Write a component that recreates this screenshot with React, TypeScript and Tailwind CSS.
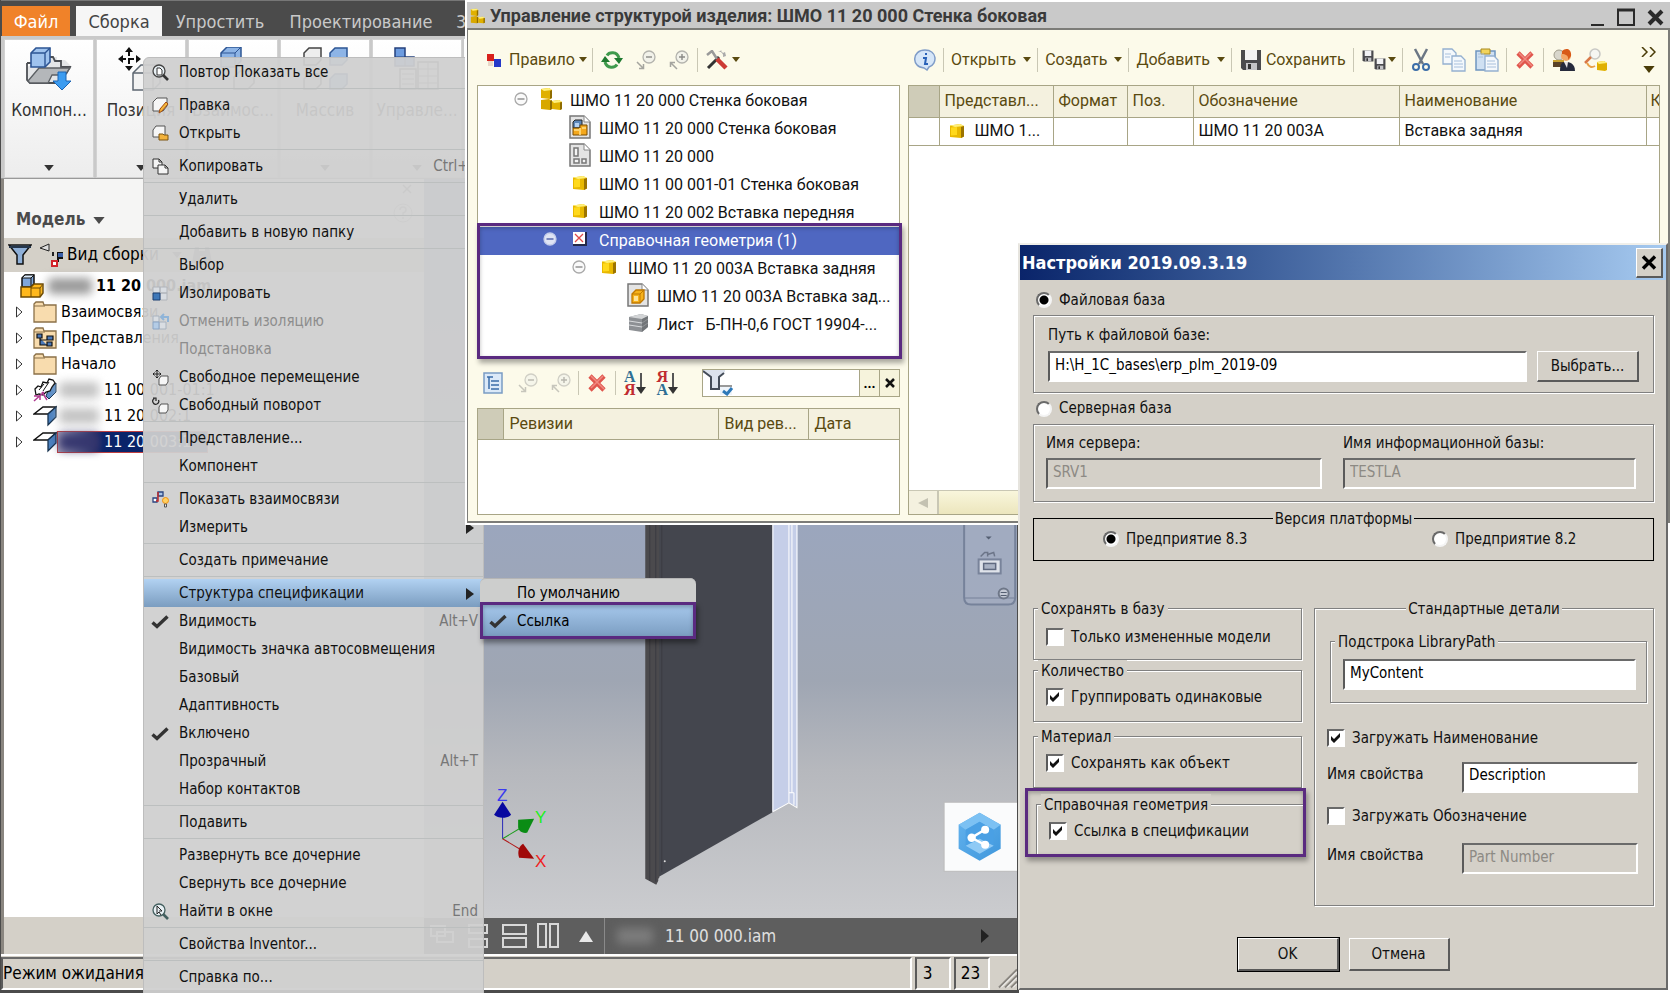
import { useState, type ReactNode } from 'react'
import { clsx } from 'clsx'

const TAHOMA = "font-['DejaVu_Sans_Condensed','Noto_Sans',sans-serif]"
const ROBOTO = "font-['Roboto','Liberation_Sans',sans-serif]"

const SUNKEN = 'border-2 border-t-[#6a6a6a] border-l-[#5a5a5a] border-r-white border-b-white'
const RAISED = 'border-t border-l border-r-2 border-b-2 border-t-white border-l-white border-r-[#5a5a5a] border-b-[#5a5a5a]'
const ETCHED = 'border border-[#808080] shadow-[1px_1px_0_#fff,inset_1px_1px_0_#fff]'

interface IconProps {
  className?: string
}

/* ---------- shared icons ---------- */

function Caret({ className }: IconProps) {
  return (
    <svg viewBox="0 0 8 5" className={clsx('w-2 h-[5px] shrink-0', className)}>
      <path d="M0 0h8L4 5z" fill="currentColor" />
    </svg>
  )
}

function CheckMark({ className }: IconProps) {
  return (
    <svg viewBox="0 0 18 14" className={className}>
      <path d="M1.500 7.500 6 11.500 16.500 1.500" fill="none" stroke="#333" strokeWidth="3.400" />
    </svg>
  )
}

function YellowPart({ className }: IconProps) {
  return (
    <svg viewBox="0 0 16 16" className={clsx('w-4 h-4', className)}>
      <path d="M1 2.500 11 1l4 2v10.500l-3 1.500L1 14z" fill="#e8b800" />
      <path d="M1 2.500 11 1l4 2-9 1z" fill="#fff07a" />
      <path d="M12 4l3-1v10.500L12 15z" fill="#9c7400" />
      <path d="M2 4.500 8 4v8l-6 .5z" fill="#ffd91c" />
    </svg>
  )
}

function YellowAssembly({ className }: IconProps) {
  return (
    <svg viewBox="0 0 22 24" className={className}>
      <path d="M1 2 9 1l3 2v8l-2 1-9-1z" fill="#e0b000" />
      <path d="M1 2 9 1l3 2-8 1z" fill="#fff07a" />
      <path d="M10 4l2-1v8l-2 1z" fill="#8f6c00" />
      <path d="M1 13l8-1 3 2v8l-2 1-9-1z" fill="#d8a800" />
      <path d="M10 14l2-1v9l-2 1z" fill="#8f6c00" />
      <path d="M12 14l7-1 3 2v7l-2 1-8-1z" fill="#e0b000" />
      <path d="M12 14l7-1 3 2-8 1z" fill="#fff07a" />
      <path d="M20 15.500l2-.5v7l-2 1z" fill="#8f6c00" />
    </svg>
  )
}

function Minus({ className, light }: IconProps & { light?: boolean }) {
  return (
    <svg viewBox="0 0 14 14" className={clsx('w-[14px] h-[14px]', className)}>
      <circle cx="7" cy="7" r="6" fill={light ? '#dfe4f4' : '#fafafa'} stroke={light ? '#c5cdea' : '#a9a9a9'} strokeWidth="1.300" />
      <path d="M3.500 7h7" stroke={light ? '#4f5fa8' : '#8c8c8c'} strokeWidth="1.400" />
    </svg>
  )
}

function ZoomArrow({ plus, className }: IconProps & { plus?: boolean }) {
  return (
    <svg viewBox="0 0 20 20" className={clsx('w-5 h-5', className)}>
      <circle cx="13" cy="7" r="6" fill="#f2f2ea" stroke="#b3b3ad" strokeWidth="1.300" />
      <path d={plus ? 'M10 7h6M13 4v6' : 'M10 7h6'} stroke="#8a8a86" strokeWidth="1.400" />
      <path d={plus ? 'M8 19 2 13M1.500 17v-4.500H6' : 'M1 12l6 6M7.500 14v4.500H3'} stroke="#a5a59f" strokeWidth="1.500" fill="none" />
    </svg>
  )
}

function RedCross({ className }: IconProps) {
  return (
    <svg viewBox="0 0 18 18" className={clsx('w-[18px] h-[18px]', className)}>
      <path d="M2 2 16 16M16 2 2 16" stroke="#e0564d" strokeWidth="4.600" />
      <path d="M3 2 16 15M15 2 3 14" stroke="#f08a80" strokeWidth="1.500" />
    </svg>
  )
}

/* ---------- Inventor ribbon ---------- */

function PlaceIcon() {
  return (
    <svg viewBox="0 0 46 44" className="w-[46px] h-11">
      <path d="M1 20V33l3 3h27l5-8-8-4 17-5-6-6h-8v-3H22z" fill="#e4e6e8" />
      <path d="M1 16h4M1 16v17l3 3h26M24 10h3l2 4h6v6h9l-4 7" fill="none" stroke="#4c4f54" strokeWidth="1.800" />
      <path d="M2 34 13 21h31l-5 7H26l-4 8H4z" fill="#b4b7ba" stroke="#5c6064" strokeWidth="1.300" />
      <path d="M5 6 10 1h14v14l-5 5H5z" fill="#9fc3ee" stroke="#2d5594" strokeWidth="1.600" />
      <path d="M5 6h14v14M19 6l5-5" fill="none" stroke="#2d5594" strokeWidth="1.400" />
      <path d="M32 25h8v9h5l-9 9-9-9h5z" fill="#3c9cf0" stroke="#1b64b4" />
    </svg>
  )
}

function MoveIcon() {
  return (
    <svg viewBox="0 0 46 44" className="w-[46px] h-11">
      <path d="M11 3v18M2 12h18" stroke="#111" strokeWidth="2" strokeDasharray="6 2" />
      <path d="M11 0l4 5H7zM11 24l4-5H7zM0 12l5-4v8zM23 12l-5-4v8z" fill="#111" />
      <path d="M15 26l8-8h19v18l-7 7H15z" fill="#f2f2f2" stroke="#5c6670" strokeWidth="1.500" />
      <path d="M15 26h20v17M35 26l7-8" fill="none" stroke="#5c6670" strokeWidth="1.300" />
    </svg>
  )
}

function ConstrainIcon() {
  return (
    <svg viewBox="0 0 46 44" className="w-[46px] h-11">
      <path d="M11 6l6-6h14v14l-6 6H11z" fill="#8db4e6" stroke="#2d5594" strokeWidth="1.500" />
      <path d="M11 6h14v14M25 6l6-6" fill="none" stroke="#2d5594" />
      <path d="M24 30l6-6h14v12l-6 6H24z" fill="#eee" stroke="#555" strokeWidth="1.500" />
    </svg>
  )
}

function PatternIcon() {
  return (
    <svg viewBox="0 0 46 44" className="w-[46px] h-11">
      <path d="M2 6l5-5h12v12l-5 5H2zM2 32l5-5h12v10l-5 5H2z" fill="#eee" stroke="#444" strokeWidth="1.500" />
      <path d="M28 6l5-5h12v12l-5 5H28zM28 32l5-5h12v10l-5 5H28z" fill="#8db4e6" stroke="#2d5594" strokeWidth="1.500" />
    </svg>
  )
}

function ManageIcon() {
  return (
    <svg viewBox="0 0 46 44" className="w-[46px] h-11">
      <path d="M1 1h10v9h9v9H1z" fill="#6d9ce0" stroke="#24407c" strokeWidth="1.500" />
      <path d="M1 10h10v9" fill="none" stroke="#24407c" />
      <path d="M6 22h16v20H6zM24 15h20v27H24z" fill="#f4f4f4" stroke="#555" strokeWidth="1.500" />
      <path d="M8 27h12M8 32h12M8 37h12M24 22h20M34 15v27M24 29h20M24 36h20" stroke="#777" />
    </svg>
  )
}

const RIBBON: { label: string; icon: ReactNode }[] = [
  { label: 'Компон...', icon: <PlaceIcon /> },
  { label: 'Позиция', icon: <MoveIcon /> },
  { label: 'Взаимос...', icon: <ConstrainIcon /> },
  { label: 'Массив', icon: <PatternIcon /> },
  { label: 'Управле...', icon: <ManageIcon /> },
]

function Ribbon() {
  return (
    <>
      <nav className="flex h-9 items-end bg-[#4b4b4b] border-t border-[#777] pl-px text-[18px] text-[#c9c9c9] whitespace-nowrap overflow-hidden">
        <a href="#file" className="flex h-[30px] w-[68px] items-center justify-center bg-[#f08229] text-white">Файл</a>
        <a href="#assembly" className="ml-[6px] flex h-[30px] w-[86px] items-center justify-center bg-[#f6f6f6] text-[#444]">Сборка</a>
        <a href="#simplify" className="flex h-[30px] w-[116px] items-center justify-center">Упростить</a>
        <a href="#design" className="flex h-[30px] w-[166px] items-center justify-center">Проектирование</a>
        <a href="#3d" className="flex h-[30px] items-center pl-3">3D-модель</a>
      </nav>
      <div className="flex h-[143px] gap-[2px] overflow-hidden border-b border-[#999] bg-[#c9c9c9] pl-[3px] pt-[3px]">
        {RIBBON.map(item => (
          <button key={item.label} className="flex w-[90px] shrink-0 flex-col items-center border border-[#d2d2d2] bg-gradient-to-b from-white to-[#ededed] pt-[7px] text-[17px] text-[#333]">
            {item.icon}
            <span className="mt-[7px] leading-6">{item.label}</span>
            <Caret className="mt-[43px] w-3! h-[6px]!" />
          </button>
        ))}
        <div className="flex-1 bg-gradient-to-b from-white to-[#ededed]" />
      </div>
    </>
  )
}

/* ---------- Inventor model browser ---------- */

function FolderIcon({ views }: { views?: boolean }) {
  return (
    <svg viewBox="0 0 24 22" className="h-[22px] w-6">
      <path d="M1 3 3 1h7l1 3h12v17H1z" fill="#f8dcae" stroke="#8a7048" strokeWidth="1.300" />
      <path d="M1 5h11" stroke="#8a7048" />
      {views && <path d="M4 7h5v4H4zM14 9h6v4h-6zM14 15h5v4h-5zM7 11v7h7M7 13h7" fill="#4a78b8" stroke="#111" strokeWidth="1.200" />}
    </svg>
  )
}

function SheetPartIcon({ first }: { first?: boolean }) {
  return (
    <svg viewBox="0 0 24 24" className="h-6 w-6">
      {first ? (
        <>
          <path d="M15 13 23 5v9l-7 7-3-3z" fill="#5d8fc8" stroke="#16324f" />
          <path d="M2 11 5 8l3 1 2-5 4 1 2-4 4 1 2 3-3 4-2 4-4 1-3 3-4-1-3 1z" fill="#fff" stroke="#111" strokeWidth="1.300" />
          <path d="M6 12l5-6M10 13l6-9" stroke="#111" />
          <path d="M1 18h6v4M1 23l10-9M9 14l5 8" stroke="#b03a90" strokeWidth="1.500" fill="none" />
        </>
      ) : (
        <>
          <path d="M1 10 10 3h13l-8 7z" fill="#fff" stroke="#111" strokeWidth="1.500" />
          <path d="M15 10 23 3v10l-8 8z" fill="#4c82c0" stroke="#16324f" strokeWidth="1.300" />
        </>
      )}
    </svg>
  )
}

function AssemblyIcon() {
  return (
    <svg viewBox="0 0 24 24" className="h-6 w-6">
      <path d="M2 4 5 1h9v9l-3 3H2z" fill="#7fa6da" stroke="#111" strokeWidth="1.500" />
      <path d="M2 4 5 1h9l-3 3z" fill="#dcebfb" stroke="#111" />
      <path d="M11 4v9" stroke="#111" />
      <path d="M1 13h10l3-3h9v9l-3 4H1z" fill="#ffb81c" stroke="#6e4a00" strokeWidth="1.500" />
      <path d="M11 13v10M11 14h9v9M20 14l3-4" fill="none" stroke="#6e4a00" />
    </svg>
  )
}

interface BrowserRow {
  label: string
  icon: ReactNode
  masked?: boolean
  selected?: boolean
}

const BROWSER_ROWS: BrowserRow[] = [
  { label: 'Взаимосвязи', icon: <FolderIcon /> },
  { label: 'Представления', icon: <FolderIcon views /> },
  { label: 'Начало', icon: <FolderIcon /> },
  { label: '11 00 001-01:1', icon: <SheetPartIcon first />, masked: true },
  { label: '11 20 002:1', icon: <SheetPartIcon />, masked: true },
  { label: '11 20 003:1', icon: <SheetPartIcon />, masked: true, selected: true },
]

function ModelBrowser() {
  return (
    <aside className="flex w-[423px] shrink-0 flex-col border-l-[3px] border-[#8a8680] bg-[#d4d0c8] text-[16px]">
      <div className="flex h-[59px] bg-[#f5f5f4] pl-3">
        <div className="flex flex-1 items-end pb-[6px] text-[17px] font-bold text-[#4b4b4b]">
          Модель <Caret className="mb-2 ml-2 w-3! h-[7px]!" />
        </div>
        <svg viewBox="0 0 30 50" className="mr-1 h-[50px] w-[30px]" fill="none" stroke="#777">
          <path d="M13 6l8 8M21 6l-8 8" strokeWidth="1.500" />
          <circle cx="13" cy="34" r="9" stroke="#aaa" />
          <path d="M10 31q0-3 3-3t3 3q0 2-3 3v2M13 38v2" stroke="#999" strokeWidth="1.500" />
        </svg>
      </div>
      <div className="flex h-[34px] items-center pl-1">
        <svg viewBox="0 0 24 22" className="h-[22px] w-6">
          <path d="M1 1h22L15 11v9H9v-9z" fill="#8fb0d8" stroke="#111" strokeWidth="1.500" />
          <path d="M1 3h22" stroke="#25364c" strokeWidth="2" />
        </svg>
        <svg viewBox="0 0 24 24" className="ml-2 h-6 w-6">
          <path d="M0 5 9 1v7z" fill="#ddd" stroke="#222" />
          <path d="M13 9v4" stroke="#222" strokeWidth="2" />
          <path d="M14 18h4V10h4v5h-3" fill="none" stroke="#111" strokeWidth="2" />
          <path d="M18 10h5v4h-5z" fill="#3a5fa8" />
          <path d="M12 18h5v5h-5z" fill="#fff" stroke="#d2232a" strokeWidth="2" />
        </svg>
        <span className="ml-[3px] text-[17px]">Вид сборки</span>
        <Caret className="ml-3 w-3! h-[6px]! text-[#666]" />
        <svg viewBox="0 0 22 20" className="ml-2 h-5 w-[22px]">
          <path d="M4 2h4v4h6V2h4l3 16h-8v-7H9v7H1z" fill="#777" />
        </svg>
      </div>
      <div className="flex-1 bg-white text-black">
        <div className="flex h-[27px] items-center pl-4 font-bold">
          <AssemblyIcon />
          <span className="mx-1 h-4 w-11 rounded bg-[#9a9a9a] blur-[5px]" />
          <span>11 20 000.iam</span>
        </div>
        <ul>
          {BROWSER_ROWS.map((row, i) => (
            <li key={i} className="flex h-[26px] items-center whitespace-nowrap pl-3">
              <svg viewBox="0 0 7 12" className="h-3 w-[7px]">
                <path d="M.5 1v10L6 6z" fill="#fff" stroke="#333" />
              </svg>
              <span className="ml-[10px]">{row.icon}</span>
              {row.masked ? (
                <span className={clsx('ml-[1px] flex h-5 items-center pr-4', row.selected && 'bg-gradient-to-r from-[#a69fb8] from-0% via-[#2a2f68] via-25% to-[#0a246a] to-30% text-white outline outline-[#c04040]')}>
                  <span className={clsx('mx-px h-4 w-10 rounded blur-[5px]', row.selected ? 'bg-[#35366e]' : 'bg-[#c4c4c4]')} />
                  <span className="ml-1">{row.label}</span>
                </span>
              ) : (
                <span className="ml-1">{row.label}</span>
              )}
            </li>
          ))}
        </ul>
      </div>
      <div className="h-[37px]" />
    </aside>
  )
}

/* ---------- Inventor 3D view ---------- */

function Viewport() {
  return (
    <svg viewBox="424 179 592 738" preserveAspectRatio="xMaxYMax slice" className="min-h-0 w-full flex-1">
      <defs>
        <linearGradient id="sky" x1="0" y1="0" x2="0" y2="1">
          <stop offset="0" stopColor="#8795b0" />
          <stop offset=".47" stopColor="#9ba6bd" />
          <stop offset=".68" stopColor="#9fa6b3" />
          <stop offset=".8" stopColor="#b6b8bd" />
          <stop offset="1" stopColor="#cbcccf" />
        </linearGradient>
        <linearGradient id="hex" x1="0" y1="0" x2="1" y2="1">
          <stop offset="0" stopColor="#64b3ee" />
          <stop offset="1" stopColor="#3f97dc" />
        </linearGradient>
      </defs>
      <rect x="424" y="179" width="594" height="738" fill="url(#sky)" />
      {/* panel body */}
      <path d="M657 179H773V811L657 877z" fill="#44464e" />
      <path d="M645 179h14v698l-1 1v2l-2 4-11-6z" fill="#4b4a4d" />
      <path d="M649.500 179v701M655.500 179v702M661.500 179v692" stroke="#3b3b42" />
      <circle cx="664.500" cy="860.500" r="1" fill="#ddd" />
      {/* highlighted insert */}
      <path d="M772 179h25v627l-9-4-16 9z" fill="#c5cee8" />
      <path d="M772.500 179v632l16-9 8 5V179M788.500 179v613h5M791.500 179v613M793.500 792v12M788.500 792v10" stroke="#fff" fill="none" />
      {/* axes */}
      <path d="M502.500 838v-24" stroke="#2a2ab8" />
      <path d="M502.500 838l20-12" stroke="#1c9c1c" />
      <path d="M502.500 838l20 12" stroke="#b01818" />
      <path d="M502.500 801 511 814c-4 4-13 4-17 0z" fill="#0808a0" />
      <path d="M518 819l16-1-7 14c-6 1-9-3-9-6z" fill="#0a8c14" />
      <path d="M523 843l11 15-15-1c-2-6 0-12 4-14z" fill="#a00808" />
      <g fontFamily="Liberation Sans" fontSize="17">
        <text x="497" y="800" fill="#3a3af0">Z</text>
        <text x="535" y="822" fill="#1cf01c">Y</text>
        <text x="535" y="866" fill="#f02020">X</text>
      </g>
      {/* navigation bar */}
      <path d="M963.500 179V597q0 7 7 7h37q7 0 7-7V179" fill="#a4aec2" fillOpacity=".7" stroke="#76829a" strokeWidth="2" />
      <path d="M985 536h6l-3 3z" fill="#555f72" />
      <path d="M980 556l4-4h3v4M987 554l6-2 1 4" fill="none" stroke="#6c7588" strokeWidth="1.500" />
      <rect x="978" y="559" width="22" height="14" fill="#dfe3ea" stroke="#78839a" strokeWidth="2" />
      <rect x="983" y="563" width="12" height="6" fill="#aab3c4" stroke="#606a80" strokeWidth="1.500" />
      <path d="M964 597.500h50" stroke="#76829a" />
      <circle cx="1003" cy="593" r="5" fill="#c4c9d4" stroke="#6e7788" strokeWidth="2" />
      <path d="M1000 592h6M1000 595h6" stroke="#555f72" />
      {/* share plate */}
      <rect x="943.500" y="801.500" width="74" height="69" fill="#fafbfc" stroke="#bbb" />
      <path d="M979 812l21 12v24l-21 12-21-12v-24z" fill="url(#hex)" />
      <path d="M979 812l21 12-7 5-14-8-14 8-7-5z" fill="#7cc1f3" />
      <path d="M965 829l14-8 14 8v16l-14 8-14-8z" fill="#4aa0e4" />
      <path d="M965 845l14 8 14-8-14-7z" fill="#8fcaf5" />
      <path d="M984 829l-13 8 13 7" fill="none" stroke="#fff" strokeWidth="2.500" />
      <g fill="#fff">
        <circle cx="984.500" cy="829" r="4" />
        <circle cx="971" cy="837" r="4.200" />
        <circle cx="984.500" cy="844" r="4" />
      </g>
    </svg>
  )
}

function DocumentBar() {
  return (
    <div className="flex h-9 items-center bg-[#5e5e5e] pl-1 pt-px text-[17px] text-[#e0e0e0]">
      <svg viewBox="0 0 174 36" className="h-9 w-[176px] shrink-0" fill="none" stroke="#d8d8d8" strokeWidth="2">
        <path d="M2 8h14v10H2zM8 14h16v10H8zM40 7h18v8H40zM40 21h18v8H40z" />
        <path d="M74 7h23v9H74zM74 20h23v9H74zM109 6h8v23h-8zM121 6h8v23h-8z" />
        <path d="M150 24l7-11 7 11z" fill="#e8e8e8" stroke="none" />
      </svg>
      <div className="h-9 w-px bg-[#8a8a8a]" />
      <span className="ml-3 mr-3 h-4 w-9 rounded bg-[#7c7c7c] blur-[5px]" />
      <span className="flex-1">11 00 000.iam</span>
      <svg viewBox="0 0 8 14" className="mr-7 h-[14px] w-2"><path d="M0 0 8 7 0 14z" fill="#222" /></svg>
    </div>
  )
}

function InventorWindow() {
  return (
    <div className={clsx('flex min-h-screen w-[61%] flex-col border-l border-r-2 border-[#4b4b4b] bg-[#d4d0c8]', TAHOMA)}>
      <Ribbon />
      <div className="flex min-h-0 flex-1">
        <ModelBrowser />
        <div className="flex min-w-0 flex-1 flex-col">
          <Viewport />
          <DocumentBar />
        </div>
      </div>
      <footer className="flex h-10 gap-[3px] border-t-2 border-b-4 border-b-[#4b4b4b] border-t-white pt-px text-[17px] text-black">
        <div className={clsx('flex flex-1 items-center', SUNKEN)}>Режим ожидания</div>
        <div className={clsx('flex w-9 items-center pl-[6px]', SUNKEN)}>3</div>
        <div className={clsx('flex w-9 items-center pl-[5px]', SUNKEN)}>23</div>
        <svg viewBox="0 0 24 30" className="w-6" stroke="#8a8680" strokeWidth="2">
          <path d="M6 29 24 11M12 29l12-12M18 29l6-6" />
          <path d="M8 29 24 13M14 29l10-10M20 29l4-4" stroke="#fff" strokeWidth="1" />
        </svg>
      </footer>
    </div>
  )
}

/* ---------- context menu ---------- */

function MenuIcon({ children }: { children: ReactNode }) {
  return <svg viewBox="0 0 17 17" className="h-[17px] w-[17px]" fill="none">{children}</svg>
}

const searchIcon = (
  <MenuIcon>
    <circle cx="7" cy="7" r="6" fill="#e8f0f4" stroke="#444" strokeWidth="1.300" />
    <path d="M5 4h3l2 2v5H5z" fill="#fff" stroke="#333" />
    <path d="M11 11l5 5" stroke="#333" strokeWidth="2.600" />
  </MenuIcon>
)
const findIcon = (
  <MenuIcon>
    <circle cx="7" cy="7" r="6" fill="#e8f0f4" stroke="#446060" strokeWidth="1.300" />
    <path d="M5 3v8l2-2 2 3M5 3l5 5H7" stroke="#222" />
    <path d="M11 11l5 5" stroke="#446060" strokeWidth="2.600" />
  </MenuIcon>
)
const editIcon = (
  <MenuIcon>
    <path d="M1 5 5 1h10v8l-4 5H1z" fill="#f6f6f6" stroke="#555" />
    <path d="M7 16l1-4 6-7 2 2-6 7z" fill="#f6b83c" stroke="#a04a10" />
  </MenuIcon>
)
const openIcon = (
  <MenuIcon>
    <path d="M1 5 4 1h9v11H1z" fill="#f6f6f6" stroke="#555" />
    <path d="M7 9h4l1 1h4v5H7z" fill="#f2b23c" stroke="#7c5410" />
  </MenuIcon>
)
const copyIcon = (
  <MenuIcon>
    <path d="M1 1h6l3 3v6H1z" fill="#f4f4f4" stroke="#333" />
    <path d="M7 1v3h3" stroke="#333" />
    <path d="M6 7h7l3 3v6H6z" fill="#f4f4f4" stroke="#333" />
    <path d="M13 7v3h3" stroke="#333" />
  </MenuIcon>
)
const isolateIcon = (
  <MenuIcon>
    <path d="M1 2h7v6H1zM8 2h7v6H8zM8 8h7v7H8z" fill="#d9dde2" stroke="#b0b4ba" />
    <path d="M1 8h7v7H1z" fill="#3f78b8" stroke="#1c3f70" />
  </MenuIcon>
)
const undoIsolateIcon = (
  <MenuIcon>
    <path d="M1 3h6v6H1zM7 9h7v7H7z" fill="#d9dde2" stroke="#a8b2be" />
    <path d="M1 9h6v7H1z" fill="#b4cce6" stroke="#8aa4c4" />
    <path d="M16 9V4H9M12 1 9 4l3 3" stroke="#8fb4d8" strokeWidth="2" />
  </MenuIcon>
)
const freeMoveIcon = (
  <MenuIcon>
    <path d="M5 1v8M1 5h8" stroke="#222" />
    <path d="M3.500 2.500 5 1l1.500 1.500M3.500 7.500 5 9l1.500-1.500M2.500 3.500 1 5l1.500 1.500M7.500 3.500 9 5 7.500 6.500" stroke="#222" />
    <path d="M7 10l2-3h7v6l-2 3H7z" fill="#f6f6f6" stroke="#555" />
  </MenuIcon>
)
const freeRotateIcon = (
  <MenuIcon>
    <path d="M2.500 1.500A3 3 0 1 0 6.500 3M1 1h3v3" stroke="#222" strokeWidth="1.200" />
    <path d="M7 10l2-3h7v6l-2 3H7z" fill="#f6f6f6" stroke="#555" />
  </MenuIcon>
)
const relationsIcon = (
  <MenuIcon>
    <path d="M6 1h5v4H6z" fill="#a8c4e8" stroke="#2a4480" strokeWidth="1.300" />
    <path d="M1 7h4v4H1z" fill="#fff" stroke="#2a4480" strokeWidth="1.300" />
    <path d="M6 1v9H4" stroke="#c02a2a" strokeWidth="1.500" />
    <circle cx="13.500" cy="9.500" r="3" fill="#ffd060" stroke="#f09010" />
    <path d="M12.500 13h2v3h-2z" fill="#eee" stroke="#555" />
  </MenuIcon>
)
const checkIcon = <CheckMark className="h-[14px] w-[18px]" />

interface MenuEntry {
  label: string
  icon?: ReactNode
  keys?: string
  disabled?: boolean
  arrow?: boolean
  active?: boolean
}

const MENU: MenuEntry[][] = [
  [{ label: 'Повтор Показать все', icon: searchIcon }],
  [{ label: 'Правка', icon: editIcon }, { label: 'Открыть', icon: openIcon }],
  [{ label: 'Копировать', icon: copyIcon, keys: 'Ctrl+C' }],
  [{ label: 'Удалить' }],
  [{ label: 'Добавить в новую папку' }],
  [
    { label: 'Выбор' },
    { label: 'Изолировать', icon: isolateIcon },
    { label: 'Отменить изоляцию', icon: undoIsolateIcon, disabled: true },
    { label: 'Подстановка', disabled: true },
    { label: 'Свободное перемещение', icon: freeMoveIcon },
    { label: 'Свободный поворот', icon: freeRotateIcon },
  ],
  [{ label: 'Представление...' }, { label: 'Компонент' }],
  [{ label: 'Показать взаимосвязи', icon: relationsIcon }, { label: 'Измерить', arrow: true }],
  [{ label: 'Создать примечание' }],
  [
    { label: 'Структура спецификации', arrow: true, active: true },
    { label: 'Видимость', icon: checkIcon, keys: 'Alt+V' },
    { label: 'Видимость значка автосовмещения' },
    { label: 'Базовый' },
    { label: 'Адаптивность' },
    { label: 'Включено', icon: checkIcon },
    { label: 'Прозрачный', keys: 'Alt+T' },
    { label: 'Набор контактов' },
  ],
  [{ label: 'Подавить' }],
  [
    { label: 'Развернуть все дочерние' },
    { label: 'Свернуть все дочерние' },
    { label: 'Найти в окне', icon: findIcon, keys: 'End' },
  ],
  [{ label: 'Свойства Inventor...' }],
  [{ label: 'Справка по...' }],
]

function MenuItem({ item }: { item: MenuEntry }) {
  return (
    <button
      disabled={item.disabled}
      className={clsx(
        'flex h-7 w-full items-center whitespace-nowrap pr-[5px] pt-px text-left text-[15px]',
        item.disabled ? 'text-[#8d8d8d]' : 'text-[#111]',
        item.active && 'bg-gradient-to-b from-[#b2d2f2] to-[#7b9dc0]',
      )}
    >
      <span className="flex w-[35px] justify-center pr-[3px]">{item.icon}</span>
      <span className="flex-1">{item.label}</span>
      {item.keys && <span className="text-[#777]">{item.keys}</span>}
      {item.arrow && (
        <svg viewBox="0 0 8 12" className="mr-1 h-3 w-2"><path d="M0 0 8 6 0 12z" fill="#222" /></svg>
      )}
    </button>
  )
}

function ContextMenu() {
  return (
    <div className={clsx('absolute left-[143px] top-[57px] w-[341px] rounded-t-md border border-[#bdbdbd] bg-[#cfcfcf]/94 pb-[2px]', TAHOMA)}>
      {MENU.map((group, i) => (
        <div key={i}>
          {i > 0 && <hr className="my-[2px] border-t border-[#bcbfbf]" />}
          {group.map(item => <MenuItem key={item.label} item={item} />)}
        </div>
      ))}
    </div>
  )
}

function Submenu() {
  return (
    <div className={clsx('absolute left-[480px] top-[578px] w-[216px] rounded-t-md bg-[#cdcecd] text-[15px]', TAHOMA)}>
      <button className="flex h-6 w-full items-center rounded-t-md border-t border-[#b5b5b5] pl-[37px] pt-[6px]">По умолчанию</button>
      <button className="flex h-[37px] w-full items-center border-[3px] border-[#5a2a80] bg-gradient-to-b from-[#a6c8ec] to-[#7c9ec2] pl-[6px] pt-px shadow-[2px_4px_5px_#0006,inset_0_2px_4px_#0004]">
        <CheckMark className="mr-[10px] h-[15px] w-[18px]" />
        Ссылка
      </button>
    </div>
  )
}

/* ---------- 1C product structure window ---------- */

function Sep() {
  return <span className="h-6 w-px shrink-0 bg-[#c9c7b4]" />
}

function DocIcon({ kind }: { kind: 'assembly' | 'drawing' | 'part' }) {
  return (
    <svg viewBox="0 0 22 24" className="h-6 w-[22px]">
      <path d="M1 1h14l6 6v16H1z" fill="#e4e4e4" stroke="#777" strokeWidth="1.500" />
      <path d="M15 1v6h6" fill="#fff" stroke="#888" />
      {kind === 'assembly' && (
        <>
          <path d="M4 7l2-2h7v8H4z" fill="#5c86b8" stroke="#222" />
          <path d="M6 8h4v4H6z" fill="#b4d0f0" />
          <path d="M4 13h7v-3h7v10H4z" fill="#f4a81c" stroke="#7a4c00" />
          <path d="M11 13v7M5 15h5M13 13h4" stroke="#ffe08a" strokeWidth="1.500" />
        </>
      )}
      {kind === 'drawing' && <path d="M5 5h4v8H5zM5 16h5v4H5zM13 16h4v4h-4z" fill="#f5f5f5" stroke="#777" strokeWidth="1.500" />}
      {kind === 'part' && (
        <>
          <path d="M5 11l4-4h8v9l-4 4H5z" fill="#f6b21c" stroke="#c07800" strokeWidth="1.300" />
          <path d="M5 11h8v9M13 11l4-4" fill="none" stroke="#c07800" />
          <path d="M7 13h4v5H7z" fill="#ffe49a" />
        </>
      )}
    </svg>
  )
}

function SheetsIcon() {
  return (
    <svg viewBox="0 0 22 20" className="h-5 w-[22px]">
      <path d="M2 4 14 1l7 2v11l-6 5L2 17z" fill="#8d9094" />
      <path d="M2 4 14 1l7 2-6 3z" fill="#d2d4d6" />
      <path d="M2 8l13 2 6-4M2 12l13 2 6-4" stroke="#d8dadc" fill="none" />
      <path d="M15 6v13l6-5V3z" fill="#5f6266" fillOpacity=".6" />
    </svg>
  )
}

interface TreeEntry {
  label: string
  level: number
  icon: ReactNode
  open?: boolean
  selected?: boolean
}

const PRODUCT_TREE: TreeEntry[] = [
  { label: 'ШМО 11 20 000 Стенка боковая', level: 0, open: true, icon: <YellowAssembly className="h-6 w-[22px]" /> },
  { label: 'ШМО 11 20 000 Стенка боковая', level: 1, icon: <DocIcon kind="assembly" /> },
  { label: 'ШМО 11 20 000', level: 1, icon: <DocIcon kind="drawing" /> },
  { label: 'ШМО 11 00 001-01 Стенка боковая', level: 1, icon: <YellowPart /> },
  { label: 'ШМО 11 20 002 Вставка передняя', level: 1, icon: <YellowPart /> },
  {
    label: 'Справочная геометрия (1)', level: 1, open: true, selected: true,
    icon: (
      <svg viewBox="0 0 14 14" className="h-[14px] w-[14px]">
        <rect width="14" height="14" fill="#23284a" />
        <rect width="12" height="12" fill="#fff" />
        <path d="M2 2l8 8M10 2l-8 8" stroke="#e04a4a" strokeWidth="1.300" />
      </svg>
    ),
  },
  { label: 'ШМО 11 20 003А Вставка задняя', level: 2, open: true, icon: <YellowPart /> },
  { label: 'ШМО 11 20 003А Вставка зад...', level: 3, icon: <DocIcon kind="part" /> },
  { label: 'Лист \u00a0 Б-ПН-0,6 ГОСТ 19904-...', level: 3, icon: <SheetsIcon /> },
]

const INDENT = ['pl-8', 'pl-[61px]', 'pl-[90px]', 'pl-[119px]']

function ProductTree() {
  return (
    <div className="relative h-[273px] border border-[#a8a586] bg-white">
      <ul className="pt-px">
        {PRODUCT_TREE.map((row, i) => (
          <li
            key={i}
            className={clsx('flex h-7 items-center overflow-hidden whitespace-nowrap', INDENT[row.level], row.selected ? 'bg-[#4f67c1] text-white' : 'text-[#111]')}
          >
            <span className="flex w-[30px] shrink-0 justify-center pb-1 pr-2">{row.open && <Minus light={row.selected} />}</span>
            <span className="mr-2 flex w-[22px] shrink-0 justify-center pb-1">{row.icon}</span>
            {row.label}
          </li>
        ))}
      </ul>
      <div className="pointer-events-none absolute -right-[3px] -left-px bottom-[-2px] top-[137px] border-[3px] border-[#5a2a80] shadow-[2px_4px_5px_#0005,inset_0_2px_4px_#0004]" />
    </div>
  )
}

function SortIcon({ top, bottom, topColor, bottomColor }: { top: string; bottom: string; topColor: string; bottomColor: string }) {
  return (
    <span className="flex items-center font-['Liberation_Serif',serif] text-[16px] font-bold leading-[13px]">
      <span className="flex flex-col">
        <span className={topColor}>{top}</span>
        <span className={bottomColor}>{bottom}</span>
      </span>
      <svg viewBox="0 0 10 24" className="h-6 w-[10px]">
        <path d="M5 2v16" stroke="#555" strokeWidth="2" />
        <path d="M0 16h10l-5 7z" fill="#333" />
      </svg>
    </span>
  )
}

function IconButton({ label, children, className }: { label: string; children: ReactNode; className?: string }) {
  return (
    <button aria-label={label} className={clsx('flex shrink-0 items-center', className)}>
      {children}
    </button>
  )
}

function StructurePane() {
  return (
    <div className="w-[423px] shrink-0">
      <div className="flex h-[55px] items-center pl-[10px] pt-1 text-[#5a4a10]">
        <button className="mr-[5px] flex items-center">
          <svg viewBox="0 0 14 14" className="mr-2 h-[14px] w-[14px]">
            <rect y="1" width="7" height="7" fill="#d8201c" />
            <rect x="1" y="8" width="5" height="5" fill="#e8d8c8" />
            <rect x="7" y="6" width="7" height="8" fill="#2438c8" />
          </svg>
          Правило
          <Caret className="ml-1" />
        </button>
        <Sep />
        <IconButton label="Обновить" className="ml-2">
          <svg viewBox="0 0 22 20" className="h-5 w-[22px]" fill="none" stroke="#3f9a4c" strokeWidth="3">
            <path d="M6 5.500C8 2 16 1 18 8M16 14.500C14 18 6 19 4 12" />
            <path d="M13 8h9l-4 6zM0 12h9L4 6z" fill="#1f7a30" stroke="none" />
          </svg>
        </IconButton>
        <IconButton label="Свернуть" className="ml-[13px]"><ZoomArrow /></IconButton>
        <IconButton label="Развернуть" className="ml-[13px] mr-2"><ZoomArrow plus /></IconButton>
        <Sep />
        <IconButton label="Сервис" className="ml-2">
          <svg viewBox="0 0 22 20" className="h-5 w-[22px]">
            <path d="M2 18 13 7" stroke="#333" strokeWidth="3" />
            <path d="M12 2a4 4 0 0 1 5 5l3-1-1-4-2 1-2-2 1-1z" fill="#aaa" />
            <path d="M1 5 6 1l5 8" stroke="#999" strokeWidth="2.500" fill="none" />
            <path d="M11 9l9 9" stroke="#cc3a34" strokeWidth="4.500" />
          </svg>
          <Caret className="ml-1" />
        </IconButton>
      </div>
      <ProductTree />
      <div className="flex h-[50px] items-center pl-[6px]">
        <IconButton label="Список">
          <svg viewBox="0 0 20 22" className="h-[22px] w-5">
            <rect x="1" y="1" width="18" height="20" fill="#dbe9f8" stroke="#7a9cc4" strokeWidth="1.500" />
            <path d="M4 5h6M8 9h8M8 13h8M8 17h8M6 5v12" stroke="#3a6ca8" strokeWidth="1.500" />
          </svg>
        </IconButton>
        <IconButton label="Свернуть ревизии" className="ml-[15px] opacity-60"><ZoomArrow /></IconButton>
        <IconButton label="Развернуть ревизии" className="ml-[13px] mr-[7px] opacity-60"><ZoomArrow plus /></IconButton>
        <Sep />
        <IconButton label="Удалить ревизию" className="mx-[9px]"><RedCross /></IconButton>
        <Sep />
        <IconButton label="По возрастанию" className="ml-2"><SortIcon top="А" bottom="Я" topColor="text-[#2f6f94]" bottomColor="text-[#c02c30]" /></IconButton>
        <IconButton label="По убыванию" className="ml-[11px]"><SortIcon top="Я" bottom="А" topColor="text-[#c02c30]" bottomColor="text-[#2f6f94]" /></IconButton>
        <div className="ml-auto flex h-7 border border-[#a8a586] bg-white">
          <svg viewBox="0 0 32 26" className="h-[26px] w-8">
            <path d="M0 0h22v2l-5 5v13H8V7L0 2z" fill="#dce2ec" />
            <path d="M0 1l8 6v12h8V7l5-4" fill="none" stroke="#444c58" strokeWidth="2" />
            <path d="M17 15h12v2H17z" fill="#999" />
            <path d="M17 17h12v8H17z" fill="#eef4fa" />
            <path d="M20 21l4 3 5-6" stroke="#2c78b8" strokeWidth="3" fill="none" />
          </svg>
          <input aria-label="Отбор" className="w-[124px] outline-none" />
          <button aria-label="Выбрать отбор" className="w-5 border-l border-[#a8a586] bg-[#f6f3dc] text-sm font-bold">...</button>
          <button aria-label="Сбросить отбор" className="flex w-5 items-center justify-center border-l border-[#a8a586] bg-[#f6f3dc]">
            <svg viewBox="0 0 10 10" className="h-[10px] w-[10px]"><path d="M1 1l8 8M9 1 1 9" stroke="#111" strokeWidth="2.500" /></svg>
          </button>
        </div>
      </div>
      <div className="h-[107px] border border-[#a8a586] bg-white">
        <table className="w-full table-fixed border-collapse text-left text-[#5a4a10]">
          <thead>
            <tr className="h-[30px] border-b border-[#a8a586] bg-[#f4f1df]">
              <th className="w-[25px] bg-[#cfccb8]" />
              <th className="border-l border-[#a8a586] pl-[6px] font-normal">Ревизии</th>
              <th className="w-[90px] border-l border-[#a8a586] pl-[6px] font-normal">Вид рев...</th>
              <th className="w-[91px] border-l border-[#a8a586] pl-[6px] font-normal">Дата</th>
            </tr>
          </thead>
        </table>
      </div>
    </div>
  )
}

function Floppy({ className }: IconProps) {
  return (
    <svg viewBox="0 0 22 22" className={className}>
      <path d="M1 1h20v20H3l-2-2z" fill="#4a4a4e" />
      <path d="M5 1h12v10H5z" fill="#f2f2f4" />
      <path d="M6 14h11v7H6z" fill="#c4c4c8" />
      <path d="M8 15h3v5H8z" fill="#333" />
    </svg>
  )
}

function PageStack({ clip }: { clip?: boolean }) {
  return (
    <svg viewBox="0 0 24 24" className="h-6 w-6">
      {clip ? (
        <>
          <path d="M1 3h19v19H1z" fill="#cfe0f2" stroke="#6f95c0" strokeWidth="1.500" />
          <path d="M6 1h9v5H6z" fill="#f2d45c" stroke="#a88a20" />
        </>
      ) : (
        <path d="M1 1h9l4 4v11H1z" fill="#f4f8fc" stroke="#94b0d0" strokeWidth="1.300" />
      )}
      <path d="M10 8h9l4 4v11H10z" fill="#f4f8fc" stroke="#94b0d0" strokeWidth="1.300" />
      <path d="M12 13h8M12 16h9M12 19h9M3 6h6M3 9h5" stroke="#a8c0dc" />
    </svg>
  )
}

const COLUMNS = [
  { title: 'Представл...', width: 'w-[114px]' },
  { title: 'Формат', width: 'w-[74px]' },
  { title: 'Поз.', width: 'w-[66px]' },
  { title: 'Обозначение', width: 'w-[206px]' },
  { title: 'Наименование', width: '' },
]

function ItemsPane() {
  return (
    <div className="flex min-w-0 flex-1 flex-col">
      <div className="flex h-[55px] items-center pl-[6px] pr-[2px] pt-1 text-[#5a4a10]">
        <IconButton label="Справка">
          <svg viewBox="0 0 22 22" className="h-[22px] w-[22px]">
            <path d="M11 1c12 0 13 14 4 17l-2 3-3-2C-3 18-2 1 11 1z" fill="#d6e6f8" stroke="#7f9cc8" strokeWidth="1.500" />
            <path d="M12 4v2M9 9h3l-1 6h3" stroke="#2a62b8" strokeWidth="2" fill="none" />
          </svg>
        </IconButton>
        <span className="ml-[7px] h-6 border-l border-[#c9c7b4]" />
        {['Открыть', 'Создать', 'Добавить'].map(name => (
          <span key={name} className="flex items-center">
            <button className="flex items-center pl-[7px] pr-[6px]">
              {name}
              <Caret className="ml-[7px]" />
            </button>
            <Sep />
          </span>
        ))}
        <button className="ml-2 flex items-center">
          <Floppy className="mr-1 h-[22px] w-[22px]" />
          Сохранить
        </button>
        <span className="ml-[7px] h-6 border-l border-[#c9c7b4]" />
        <IconButton label="Сохранить все" className="ml-2">
          <span className="flex items-end">
            <Floppy className="mb-2 h-[14px] w-3" />
            <Floppy className="h-[14px] w-3" />
          </span>
          <Caret className="ml-[2px]" />
        </IconButton>
        <span className="ml-[6px] h-6 border-l border-[#c9c7b4]" />
        <IconButton label="Вырезать" className="ml-[9px]">
          <svg viewBox="0 0 18 24" className="h-6 w-[18px]" fill="none">
            <path d="M3 1l8 15M15 1 7 16" stroke="#6b7684" strokeWidth="2.500" />
            <circle cx="4" cy="19" r="3" stroke="#3c6ea8" strokeWidth="2" />
            <circle cx="14" cy="19" r="3" stroke="#3c6ea8" strokeWidth="2" />
          </svg>
        </IconButton>
        <IconButton label="Копировать" className="ml-3"><PageStack /></IconButton>
        <IconButton label="Вставить" className="ml-[9px]"><PageStack clip /></IconButton>
        <span className="ml-[7px] h-6 border-l border-[#c9c7b4]" />
        <IconButton label="Удалить" className="mx-[9px]"><RedCross /></IconButton>
        <Sep />
        <IconButton label="Исполнитель" className="ml-2">
          <svg viewBox="0 0 24 24" className="h-6 w-6">
            <circle cx="7" cy="7" r="5" fill="#d8d6cc" stroke="#a09c8c" />
            <path d="M1 12h11v3H1z" fill="#c8a030" />
            <path d="M1 14h11v5H1z" fill="#5a4228" />
            <circle cx="14" cy="8" r="5" fill="#f4a868" />
            <path d="M10 3c4-4 10-2 9 5l-3 4c1-4-2-6-6-6z" fill="#d85a18" />
            <path d="M8 23c0-9 3-9 6-9s9 1 9 9z" fill="#262a3c" />
            <path d="M12 14h4l-1 6z" fill="#e8e4e4" />
          </svg>
        </IconButton>
        <IconButton label="Найти деталь" className="ml-2">
          <svg viewBox="0 0 24 24" className="h-6 w-6">
            <circle cx="11" cy="6" r="5" fill="#f6f6f2" stroke="#c8c8c4" strokeWidth="1.500" />
            <path d="M7 9 1 15" stroke="#d87848" strokeWidth="2.500" />
            <path d="M3 15q3 6 8 3" stroke="#e8a048" strokeWidth="2" fill="none" />
            <path d="M13 14l7-1 3 2v7l-2 1-8-1z" fill="#e0b000" />
            <path d="M13 14l7-1 3 2-8 1z" fill="#fff07a" />
          </svg>
        </IconButton>
        <div className="ml-auto flex flex-col items-center gap-[9px] pl-2 pr-[2px]">
          <svg viewBox="0 0 15 10" className="h-[10px] w-[15px]"><path d="M1 0l5 5-5 5M9 0l5 5-5 5" fill="none" stroke="#4a3c08" strokeWidth="1.500" /></svg>
          <Caret className="w-3! h-[7px]! text-[#4a3c08]" />
        </div>
      </div>
      <div className="flex flex-1 flex-col border border-[#a8a586] bg-white">
        <table className="w-full table-fixed border-collapse text-left">
          <thead>
            <tr className="h-[31px] border-b border-[#a8a586] bg-[#f4f1df] text-[#5a4a10]">
              <th className="w-[30px] bg-[#cfccb8]" />
              {COLUMNS.map(col => (
                <th key={col.title} className={clsx('whitespace-nowrap border-l border-[#a8a586] pl-[5px] font-normal', col.width)}>{col.title}</th>
              ))}
              <th className="w-[13px] overflow-hidden border-l border-[#a8a586] pl-1 font-normal">К</th>
            </tr>
          </thead>
          <tbody>
            <tr className="h-7 border-b border-[#a8a586] text-[#111]">
              <td />
              <td className="border-l border-[#a8a586]">
                <span className="flex items-center pl-[9px]"><YellowPart className="mr-[10px]" />ШМО 1...</span>
              </td>
              <td className="border-l border-[#a8a586]" />
              <td className="border-l border-[#a8a586]" />
              <td className="border-l border-[#a8a586] pl-[5px]">ШМО 11 20 003А</td>
              <td className="border-l border-[#a8a586] pl-[5px]">Вставка задняя</td>
              <td className="border-l border-[#a8a586]" />
            </tr>
          </tbody>
        </table>
        <div className="mt-auto flex h-6 border-t border-[#c9c7b4] bg-gradient-to-b from-[#f9f6dc] to-[#ece6bd]">
          <button aria-label="Прокрутить влево" className="flex w-[30px] items-center justify-center border-r-2 border-[#c9c7b4] bg-[#f4f1df]">
            <svg viewBox="0 0 10 10" className="h-[10px] w-[10px]"><path d="M10 0v10L0 5z" fill="#c4c2b2" /></svg>
          </button>
        </div>
      </div>
    </div>
  )
}

function StructureWindow() {
  return (
    <section className={clsx('absolute left-[465px] right-0 top-0 border-l-2 border-b-2 border-white bg-[#fcfaea] text-[16px]', ROBOTO)}>
      <header className="flex h-[30px] items-center border-b-2 border-t-2 border-b-[#7c7c78] border-t-white bg-[#c9c9c9] pl-[3px] pt-px">
        <YellowAssembly className="h-4 w-[15px]" />
        <h1 className="ml-[5px] flex-1 text-[18px] font-bold leading-6 text-[#3a3a3a]">Управление структурой изделия: ШМО 11 20 000 Стенка боковая</h1>
        <svg viewBox="0 0 75 20" className="mr-[5px] h-5 w-[75px]" fill="none" stroke="#2a2a2a">
          <path d="M1 19h13" stroke="#2a2a2a" strokeWidth="2" />
          <path d="M28 4h16v15H28z" strokeWidth="2" />
          <path d="M27 4h18" strokeWidth="3" />
          <path d="M59 5l13 13M72 5 59 18" strokeWidth="4" />
        </svg>
      </header>
      <div className="flex gap-2 border-b-2 border-l border-r-2 border-[#7c7c78] pb-[6px] pl-[9px] pr-2">
        <StructurePane />
        <ItemsPane />
      </div>
    </section>
  )
}

/* ---------- settings dialog ---------- */

interface CheckProps {
  id: string
  label: string
  checked?: boolean
  className?: string
}

function Check({ id, label, checked, className }: CheckProps) {
  const [on, setOn] = useState(!!checked)
  return (
    <label htmlFor={id} className={clsx('flex items-center gap-[7px]', className)}>
      <span className="grid">
        <input
          id={id}
          type="checkbox"
          checked={on}
          onChange={e => setOn(e.target.checked)}
          className={clsx('col-start-1 row-start-1 h-[18px] w-[18px] appearance-none bg-white', SUNKEN)}
        />
        {on && (
          <svg viewBox="0 0 18 18" className="pointer-events-none col-start-1 row-start-1 h-[18px] w-[18px]">
            <path d="M4 7l3 3 6-6v4l-6 6-3-3z" fill="#111" />
          </svg>
        )}
      </span>
      <span>{label}</span>
    </label>
  )
}

function Radio({ id, name, label, checked, className }: CheckProps & { name: string }) {
  return (
    <label htmlFor={id} className={clsx('flex items-center gap-[7px]', className)}>
      <input
        id={id}
        type="radio"
        name={name}
        defaultChecked={checked}
        className="h-4 w-4 appearance-none rounded-full border-2 border-t-[#6a6a6a] border-l-[#6a6a6a] border-r-[#f4f4f4] border-b-[#f4f4f4] bg-white checked:bg-[radial-gradient(circle,#000_0_4px,#fff_5px)]"
      />
      <span>{label}</span>
    </label>
  )
}

function Field({ id, label, value, disabled, className }: { id: string; label: string; value: string; disabled?: boolean; className?: string }) {
  return (
    <input
      id={id}
      aria-label={label}
      defaultValue={value}
      disabled={disabled}
      className={clsx('h-[31px] min-w-0 pb-1 pl-[5px] outline-none', SUNKEN, disabled ? 'bg-[#d4d0c8] text-[#8d8a84]' : 'bg-white text-black', className)}
    />
  )
}

function Group({ title, children, className }: { title: string; children: ReactNode; className?: string }) {
  return (
    <fieldset className={clsx('min-w-0', ETCHED, className)}>
      <legend className="ml-1 h-5 bg-[#d4d0c8] px-[3px] leading-[22px]">{title}</legend>
      {children}
    </fieldset>
  )
}

function SettingsDialog() {
  return (
    <section className={clsx('absolute right-[2px] top-[243px] w-[650px] border-2 border-b-[#6a6a6a] border-l-[#e6e4de] border-r-[#6a6a6a] border-t-[#f0efea] bg-[#d4d0c8] text-[15px] text-[#111]', TAHOMA)}>
      <header className="flex h-[35px] items-center bg-gradient-to-r from-[#0a246a] to-[#a6caf0] pl-[2px] pr-[3px]">
        <h2 className="flex-1 text-[18px] font-bold text-white">Настройки 2019.09.3.19</h2>
        <button aria-label="Закрыть" className={clsx('flex h-[30px] w-[27px] items-center justify-center bg-[#d4d0c8]', RAISED)}>
          <svg viewBox="0 0 16 14" className="h-[15px] w-4"><path d="M2 1l12 12M14 1 2 13" stroke="#000" strokeWidth="3.400" /></svg>
        </button>
      </header>

      <form className="pb-[17px] pl-[13px] pr-3 pt-[5px]" onSubmit={e => e.preventDefault()}>
        <Radio id="base-file" name="base" label="Файловая база" checked className="h-[30px] pl-[3px]" />
        <div className={clsx('h-[78px] px-[14px] pt-[7px]', ETCHED)}>
          <label htmlFor="path" className="block h-7 leading-6">Путь к файловой базе:</label>
          <div className="flex gap-[10px]">
            <Field id="path" label="Путь к файловой базе" value="H:\H_1C_bases\erp_plm_2019-09" className="flex-1" />
            <button className={clsx('h-[31px] w-[102px]', RAISED)}>Выбрать...</button>
          </div>
        </div>
        <Radio id="base-server" name="base" label="Серверная база" className="h-[31px] pl-[3px]" />
        <div className={clsx('flex h-[78px] gap-[21px] pl-3 pr-[17px] pt-[6px]', ETCHED)}>
          <div className="flex w-[276px] flex-col">
            <label htmlFor="server" className="h-[27px] leading-6">Имя сервера:</label>
            <Field id="server" label="Имя сервера" value="SRV1" disabled />
          </div>
          <div className="flex flex-1 flex-col">
            <label htmlFor="ib" className="h-[27px] leading-6">Имя информационной базы:</label>
            <Field id="ib" label="Имя информационной базы" value="TESTLA" disabled />
          </div>
        </div>

        <fieldset className="mt-[6px] h-[53px] border border-black">
          <legend className="mx-auto h-5 px-[2px] leading-[22px]">Версия платформы</legend>
          <div className="flex pl-[69px]">
            <Radio id="v83" name="platform" label="Предприятие 8.3" checked className="w-[329px]" />
            <Radio id="v82" name="platform" label="Предприятие 8.2" />
          </div>
        </fieldset>

        <div className="mt-[37px] flex gap-3">
          <div className="flex w-[269px] flex-col">
            <Group title="Сохранять в базу" className="h-[62px]">
              <Check id="changed" label="Только измененные модели" className="px-3 pt-2" />
            </Group>
            <Group title="Количество" className="h-[62px]">
              <Check id="group" label="Группировать одинаковые" checked className="px-3 pt-[6px]" />
            </Group>
            <Group title="Материал" className="mt-1 h-[62px]">
              <Check id="material" label="Сохранять как объект" checked className="px-3 pt-[6px]" />
            </Group>
            <div className="-ml-2 -mr-1 border-[3px] border-[#5a2a80] pl-2 pt-[3px] shadow-[2px_4px_5px_#0005,inset_0_2px_4px_#0004]">
              <Group title="Справочная геометрия" className="h-[60px] border-b-0! border-r-0! shadow-[inset_1px_1px_0_#fff]!">
                <Check id="reference" label="Ссылка в спецификации" checked className="px-3 pt-[6px]" />
              </Group>
            </div>
          </div>

          <fieldset className={clsx('h-[308px] min-w-0 flex-1 px-[6px]', ETCHED)}>
            <legend className="mx-auto h-5 bg-[#d4d0c8] px-[2px] leading-[22px]">Стандартные детали</legend>
            <Group title="Подстрока LibraryPath" className="ml-[9px] mt-[13px] h-[72px]">
              <Field id="library" label="Подстрока LibraryPath" value="MyContent" className="ml-3 mt-[8px] w-[293px]" />
            </Group>
            <Check id="name" label="Загружать Наименование" checked className="ml-[6px] mt-6" />
            <div className="ml-[6px] mr-[9px] mt-3 flex justify-between">
              <label htmlFor="name-prop" className="leading-6">Имя свойства</label>
              <Field id="name-prop" label="Имя свойства наименования" value="Description" className="w-[176px]" />
            </div>
            <Check id="code" label="Загружать Обозначение" className="ml-[6px] mt-3" />
            <div className="ml-[6px] mr-[9px] mt-4 flex justify-between">
              <label htmlFor="code-prop" className="leading-6">Имя свойства</label>
              <Field id="code-prop" label="Имя свойства обозначения" value="Part Number" disabled className="w-[176px]" />
            </div>
          </fieldset>
        </div>

        <div className="mt-8 flex justify-center gap-[10px]">
          <button className={clsx('h-[33px] w-[101px] outline outline-black', RAISED)}>OK</button>
          <button className={clsx('h-[33px] w-[101px]', RAISED)}>Отмена</button>
        </div>
      </form>
    </section>
  )
}

export default function App() {
  return (
    <main className="relative min-h-screen overflow-hidden bg-white">
      <InventorWindow />
      <ContextMenu />
      <StructureWindow />
      <Submenu />
      <SettingsDialog />
    </main>
  )
}
